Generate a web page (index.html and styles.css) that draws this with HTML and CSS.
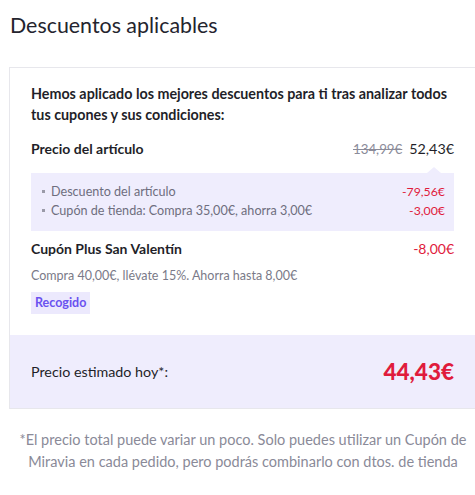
FILE: index.html
```html
<!DOCTYPE html>
<html lang="es">
<head>
<meta charset="utf-8">
<title>Descuentos aplicables</title>
<link rel="stylesheet" href="styles.css">
</head>
<body>
<div class="page">
  <h1 class="title">Descuentos aplicables</h1>
  <div class="card">
    <div class="card-body">
      <p class="intro">Hemos aplicado los mejores descuentos para ti tras analizar todos tus cupones y sus condiciones:</p>
      <div class="row price-row">
        <span class="label">Precio del artículo</span>
        <span class="prices"><s class="old">134,99€</s><span class="now">52,43€</span></span>
      </div>
      <div class="details">
        <div class="detail"><span class="bullet"></span><span class="dtext">Descuento del artículo</span><span class="neg">-79,56€</span></div>
        <div class="detail"><span class="bullet"></span><span class="dtext">Cupón de tienda: Compra 35,00€, ahorra 3,00€</span><span class="neg">-3,00€</span></div>
      </div>
      <div class="row coupon-row">
        <span class="label">Cupón Plus San Valentín</span>
        <span class="neg big">-8,00€</span>
      </div>
      <p class="sub">Compra 40,00€, llévate 15%. Ahorra hasta 8,00€</p>
      <span class="badge">Recogido</span>
    </div>
    <div class="summary">
      <span class="sum-label">Precio estimado hoy*:</span>
      <span class="total">44,43€</span>
    </div>
  </div>
  <p class="note">*El precio total puede variar un poco. Solo puedes utilizar un Cupón de Miravia en cada pedido, pero podrás combinarlo con dtos. de tienda</p>
</div>
</body>
</html>
```

FILE: styles.css
```css
html, body {
  margin: 0;
  padding: 0;
  overflow: hidden;
  background: #ffffff;
}
body {
  font-family: Lato, "Noto Sans", sans-serif;
  color: #1f1f29;
  width: 475px;
}
.page {
  padding: 11px 0 0 9px;
  width: 468px;
}
.title {
  margin: 0 0 28px 1px;
  font-size: 21.4px;
  line-height: 28px;
  font-weight: 400;
  color: #24242e;
}
.card {
  border: 1px solid #e7e7ec;
  width: 468px;
  box-sizing: border-box;
}
.card-body {
  padding: 15px 22px 21px 21px;
  display: flex;
  flex-direction: column;
  align-items: flex-start;
}
.intro {
  margin: 0;
  font-size: 14.3px;
  line-height: 21px;
  font-weight: 700;
  color: #1f1f29;
}
.row {
  width: 100%;
  display: flex;
  justify-content: space-between;
  align-items: center;
  line-height: 22px;
}
.price-row { margin-top: 13px; }
.label {
  font-size: 14px;
  font-weight: 700;
  color: #1f1f29;
}
.prices {
  display: flex;
  align-items: center;
  gap: 7px;
}
.old {
  font-size: 13.3px;
  color: #8b8b99;
}
.now {
  font-size: 14.3px;
  color: #1f1f29;
}
.details {
  position: relative;
  margin-top: 13px;
  width: 100%;
  box-sizing: border-box;
  background: #efedfd;
  padding: 9px 9px 11px 10px;
}
.details::before {
  content: "";
  position: absolute;
  top: -6px;
  right: 13px;
  border-left: 7px solid transparent;
  border-right: 7px solid transparent;
  border-bottom: 6px solid #efedfd;
}
.detail {
  display: flex;
  align-items: center;
  font-size: 12.6px;
  line-height: 19px;
  color: #6e6e7e;
}
.bullet {
  width: 3px;
  height: 3px;
  background: #9a9aa8;
  margin: 0 6px 1px 1px;
}
.dtext { flex: 1; }
.neg { color: #e01b3c; }
.detail .neg { font-size: 12.3px; }
.coupon-row { margin-top: 7px; }
.big { font-size: 14px; }
.sub {
  margin: 7px 0 0;
  font-size: 12.5px;
  line-height: 18px;
  color: #7a7a88;
}
.badge {
  margin-top: 7px;
  background: #ece9fd;
  color: #6a52f0;
  font-size: 12.5px;
  font-weight: 700;
  line-height: 22px;
  padding: 0 4px;
}
.summary {
  background: #efedfd;
  height: 73px;
  display: flex;
  align-items: center;
  justify-content: space-between;
  padding: 0 22px 0 21px;
}
.sum-label {
  font-size: 14.3px;
  color: #1f1f29;
}
.total {
  font-size: 22.5px;
  font-weight: 900;
  color: #e01b3c;
}
.note {
  margin: 20px 0 0;
  text-align: center;
  font-size: 14.5px;
  line-height: 22px;
  color: #8a8a98;
}
```
